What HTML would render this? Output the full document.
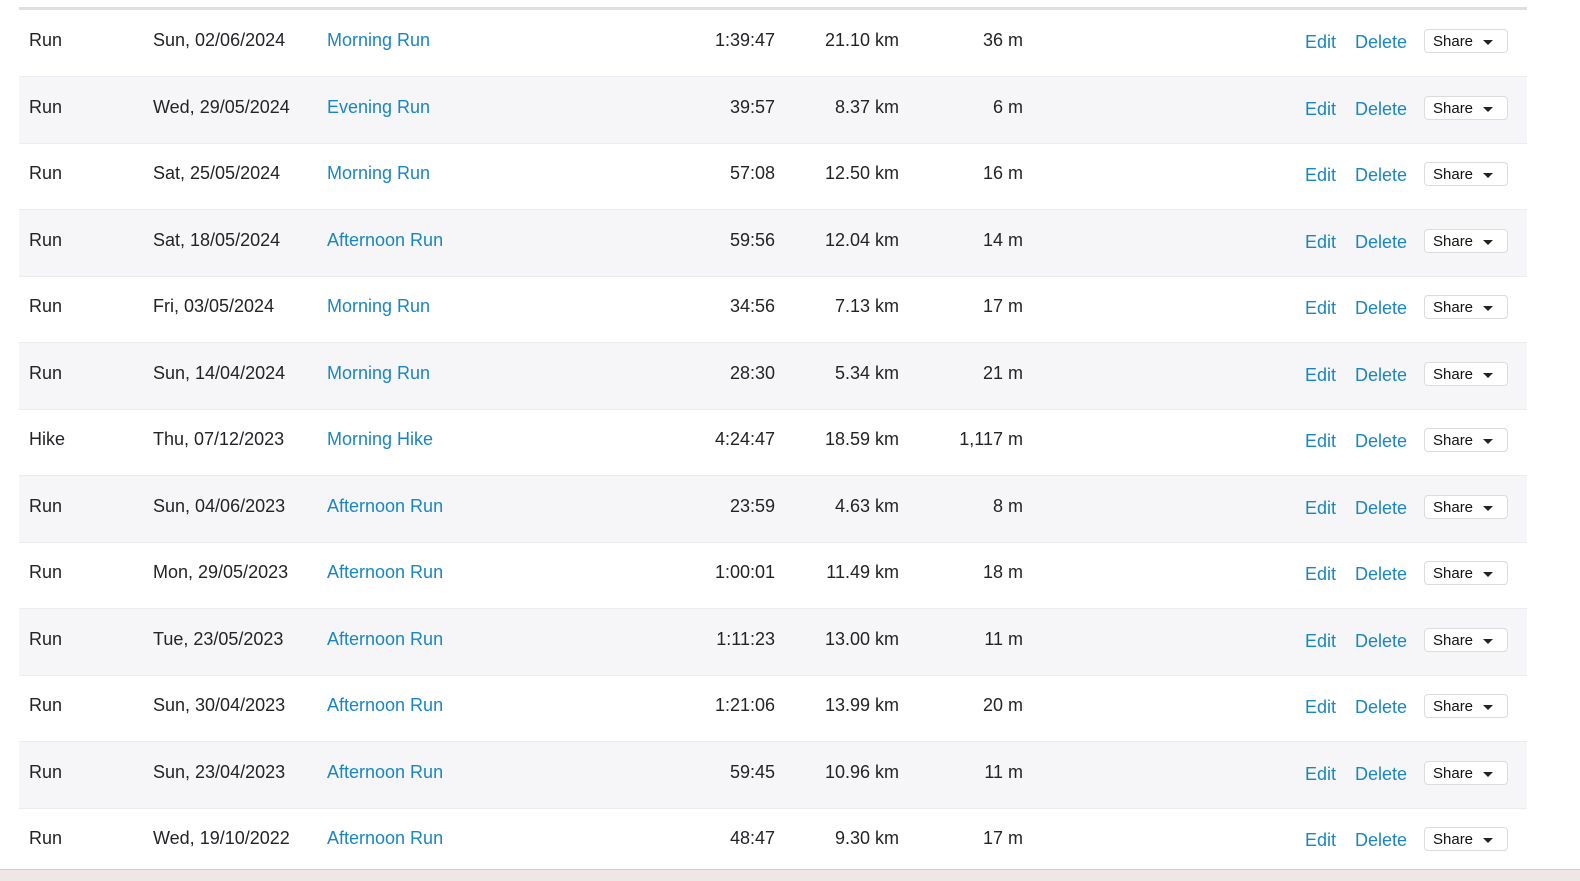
<!DOCTYPE html>
<html><head><meta charset="utf-8"><style>
body{margin:0;width:1580px;height:880px;background:#fff;font-family:"Liberation Sans",sans-serif;color:#242428;position:relative;overflow:hidden}
.top{position:absolute;left:19px;top:7px;width:1508px;height:3px;background:#dfdfe3}
.r{position:absolute;left:19px;width:1508px;height:66px;border-bottom:1px solid #ececf0;font-size:18px}
.r.g{background:#f6f6f8}
.r span{position:absolute;top:20px;white-space:nowrap}
.a{color:#1a86c0}
.l{left:10px}.d{left:134px}.n{left:308px}
.t{right:752px;text-align:right}.k{right:628px}.e{right:504px}
.ed{left:1286px;top:22px!important}.de{left:1336px;top:22px!important}
.sh{position:absolute;left:1405px;top:19px;width:84px;height:24px;border:1px solid #dcdce0;border-radius:4px;background:#fff;font-size:15px;line-height:24px;box-sizing:border-box;padding-left:8px;color:#111}
.sh:after{content:"";position:absolute;left:58px;top:10px;border-left:5px solid transparent;border-right:5px solid transparent;border-top:5px solid #222}
.bot{position:absolute;left:0;top:869px;width:1580px;height:11px;background:#efe6e6;border-top:1px solid #d8cccc}
</style></head><body>
<div class="top"></div>
<div id="rows"></div>
<div class="r" style="top:10px"><span class="l">Run</span><span class="d">Sun, 02/06/2024</span><span class="n a">Morning Run</span><span class="t">1:39:47</span><span class="k">21.10 km</span><span class="e">36 m</span><span class="ed a">Edit</span><span class="de a">Delete</span><div class="sh">Share</div></div>
<div class="r g" style="top:76.5px"><span class="l">Run</span><span class="d">Wed, 29/05/2024</span><span class="n a">Evening Run</span><span class="t">39:57</span><span class="k">8.37 km</span><span class="e">6 m</span><span class="ed a">Edit</span><span class="de a">Delete</span><div class="sh">Share</div></div>
<div class="r" style="top:143px"><span class="l">Run</span><span class="d">Sat, 25/05/2024</span><span class="n a">Morning Run</span><span class="t">57:08</span><span class="k">12.50 km</span><span class="e">16 m</span><span class="ed a">Edit</span><span class="de a">Delete</span><div class="sh">Share</div></div>
<div class="r g" style="top:209.5px"><span class="l">Run</span><span class="d">Sat, 18/05/2024</span><span class="n a">Afternoon Run</span><span class="t">59:56</span><span class="k">12.04 km</span><span class="e">14 m</span><span class="ed a">Edit</span><span class="de a">Delete</span><div class="sh">Share</div></div>
<div class="r" style="top:276px"><span class="l">Run</span><span class="d">Fri, 03/05/2024</span><span class="n a">Morning Run</span><span class="t">34:56</span><span class="k">7.13 km</span><span class="e">17 m</span><span class="ed a">Edit</span><span class="de a">Delete</span><div class="sh">Share</div></div>
<div class="r g" style="top:342.5px"><span class="l">Run</span><span class="d">Sun, 14/04/2024</span><span class="n a">Morning Run</span><span class="t">28:30</span><span class="k">5.34 km</span><span class="e">21 m</span><span class="ed a">Edit</span><span class="de a">Delete</span><div class="sh">Share</div></div>
<div class="r" style="top:409px"><span class="l">Hike</span><span class="d">Thu, 07/12/2023</span><span class="n a">Morning Hike</span><span class="t">4:24:47</span><span class="k">18.59 km</span><span class="e">1,117 m</span><span class="ed a">Edit</span><span class="de a">Delete</span><div class="sh">Share</div></div>
<div class="r g" style="top:475.5px"><span class="l">Run</span><span class="d">Sun, 04/06/2023</span><span class="n a">Afternoon Run</span><span class="t">23:59</span><span class="k">4.63 km</span><span class="e">8 m</span><span class="ed a">Edit</span><span class="de a">Delete</span><div class="sh">Share</div></div>
<div class="r" style="top:542px"><span class="l">Run</span><span class="d">Mon, 29/05/2023</span><span class="n a">Afternoon Run</span><span class="t">1:00:01</span><span class="k">11.49 km</span><span class="e">18 m</span><span class="ed a">Edit</span><span class="de a">Delete</span><div class="sh">Share</div></div>
<div class="r g" style="top:608.5px"><span class="l">Run</span><span class="d">Tue, 23/05/2023</span><span class="n a">Afternoon Run</span><span class="t">1:11:23</span><span class="k">13.00 km</span><span class="e">11 m</span><span class="ed a">Edit</span><span class="de a">Delete</span><div class="sh">Share</div></div>
<div class="r" style="top:675px"><span class="l">Run</span><span class="d">Sun, 30/04/2023</span><span class="n a">Afternoon Run</span><span class="t">1:21:06</span><span class="k">13.99 km</span><span class="e">20 m</span><span class="ed a">Edit</span><span class="de a">Delete</span><div class="sh">Share</div></div>
<div class="r g" style="top:741.5px"><span class="l">Run</span><span class="d">Sun, 23/04/2023</span><span class="n a">Afternoon Run</span><span class="t">59:45</span><span class="k">10.96 km</span><span class="e">11 m</span><span class="ed a">Edit</span><span class="de a">Delete</span><div class="sh">Share</div></div>
<div class="r" style="top:808px;border-bottom:none"><span class="l">Run</span><span class="d">Wed, 19/10/2022</span><span class="n a">Afternoon Run</span><span class="t">48:47</span><span class="k">9.30 km</span><span class="e">17 m</span><span class="ed a">Edit</span><span class="de a">Delete</span><div class="sh">Share</div></div>
<div class="bot"></div>
</body></html>
